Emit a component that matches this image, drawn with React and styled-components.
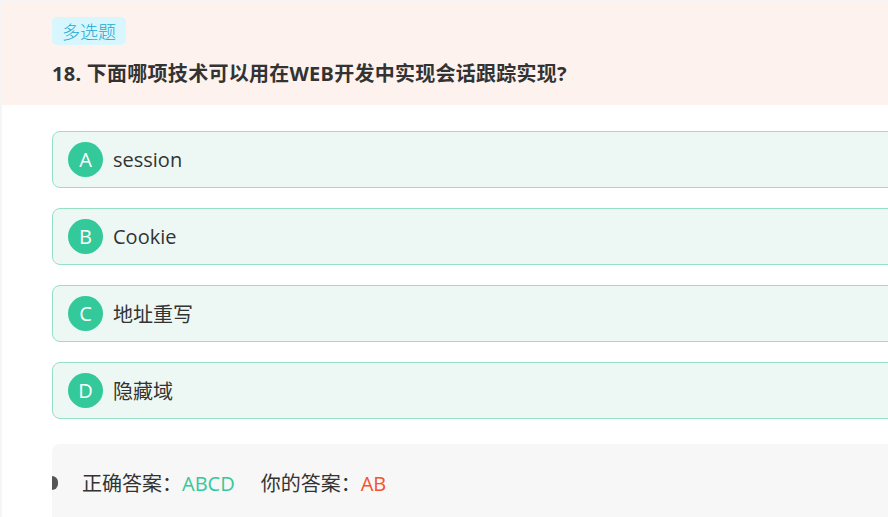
import { createGlobalStyle, styled } from "styled-components";

const GlobalStyle = createGlobalStyle`
  html, body {
    margin: 0;
    padding: 0;
    background: #f5f5f5;
    overflow: hidden;
  }
  body {
    font-family: "Noto Sans", "Noto Sans CJK SC", sans-serif;
  }
`;

const options = [
  { key: "A", text: "session" },
  { key: "B", text: "Cookie" },
  { key: "C", text: "地址重写" },
  { key: "D", text: "隐藏域" },
];

function App() {
  return (
    <>
      <GlobalStyle />
      <Page>
        <Header>
          <Tag>多选题</Tag>
          <Title>18. 下面哪项技术可以用在WEB开发中实现会话跟踪实现?</Title>
        </Header>
        <Body>
          <OptionList>
            {options.map((o) => (
              <Option key={o.key}>
                <Letter>{o.key}</Letter>
                <OptionText>{o.text}</OptionText>
              </Option>
            ))}
          </OptionList>
          <AnswerBox>
            <Marker />
            <AnswerLine>
              正确答案：<Value $color="#33c99b">ABCD</Value>
              <Spacer />
              你的答案：<Value $color="#f5522d">AB</Value>
            </AnswerLine>
          </AnswerBox>
        </Body>
      </Page>
    </>
  );
}

export default App;

const Page = styled.div`
  margin: 1px 0 0 2px;
  width: 960px;
  min-height: 520px;
  background: #fff;
`;

const Header = styled.div`
  height: 104px;
  box-sizing: border-box;
  padding: 16px 0 0 50px;
  background: #fdf2ee;
`;

const Tag = styled.span`
  display: inline-block;
  height: 28px;
  line-height: 28px;
  padding: 0 10px;
  border-radius: 5px;
  background: #d8f6fd;
  color: #17a9d4;
  font-size: 18px;
  font-weight: 300;
  font-family: "Noto Sans CJK SC", sans-serif;
`;

const Title = styled.div`
  margin-top: 15px;
  font-size: 20px;
  line-height: 28px;
  font-weight: 700;
  letter-spacing: 0.27px;
  color: #333;
  font-family: "Noto Sans", "Noto Sans CJK SC", sans-serif;
`;

const Body = styled.div`
  padding: 26px 0 0 50px;
`;

const OptionList = styled.div`
  display: flex;
  flex-direction: column;
  gap: 20px;
`;

const Option = styled.div`
  display: flex;
  align-items: center;
  gap: 10px;
  height: 57px;
  box-sizing: border-box;
  padding: 0 0 1px 15px;
  border: 1px solid #93e2c4;
  border-radius: 8px;
  background: #edf8f5;
`;

const Letter = styled.span`
  width: 35px;
  height: 35px;
  border-radius: 50%;
  background: #33c99b;
  color: #fff;
  font-size: 20px;
  display: flex;
  align-items: center;
  justify-content: center;
  font-family: "Open Sans", sans-serif;
`;

const OptionText = styled.span`
  font-size: 20px;
  color: #333;
  font-family: "Open Sans", "Noto Sans CJK SC", sans-serif;
`;

const AnswerBox = styled.div`
  position: relative;
  margin-top: 25px;
  height: 90px;
  border-radius: 8px 0 0 0;
  background: #f7f7f7;
  padding: 26px 0 0 30px;
  box-sizing: border-box;
`;

const Marker = styled.span`
  position: absolute;
  left: 0;
  top: 32px;
  width: 6px;
  height: 14px;
  border-radius: 0 7px 7px 0;
  background: #555;
`;

const AnswerLine = styled.div`
  font-size: 20px;
  line-height: 28px;
  color: #333;
  font-family: "Open Sans", "Noto Sans CJK SC", sans-serif;
`;

const Value = styled.span`
  color: ${(p) => p.$color};
`;

const Spacer = styled.span`
  display: inline-block;
  width: 26px;
`;
